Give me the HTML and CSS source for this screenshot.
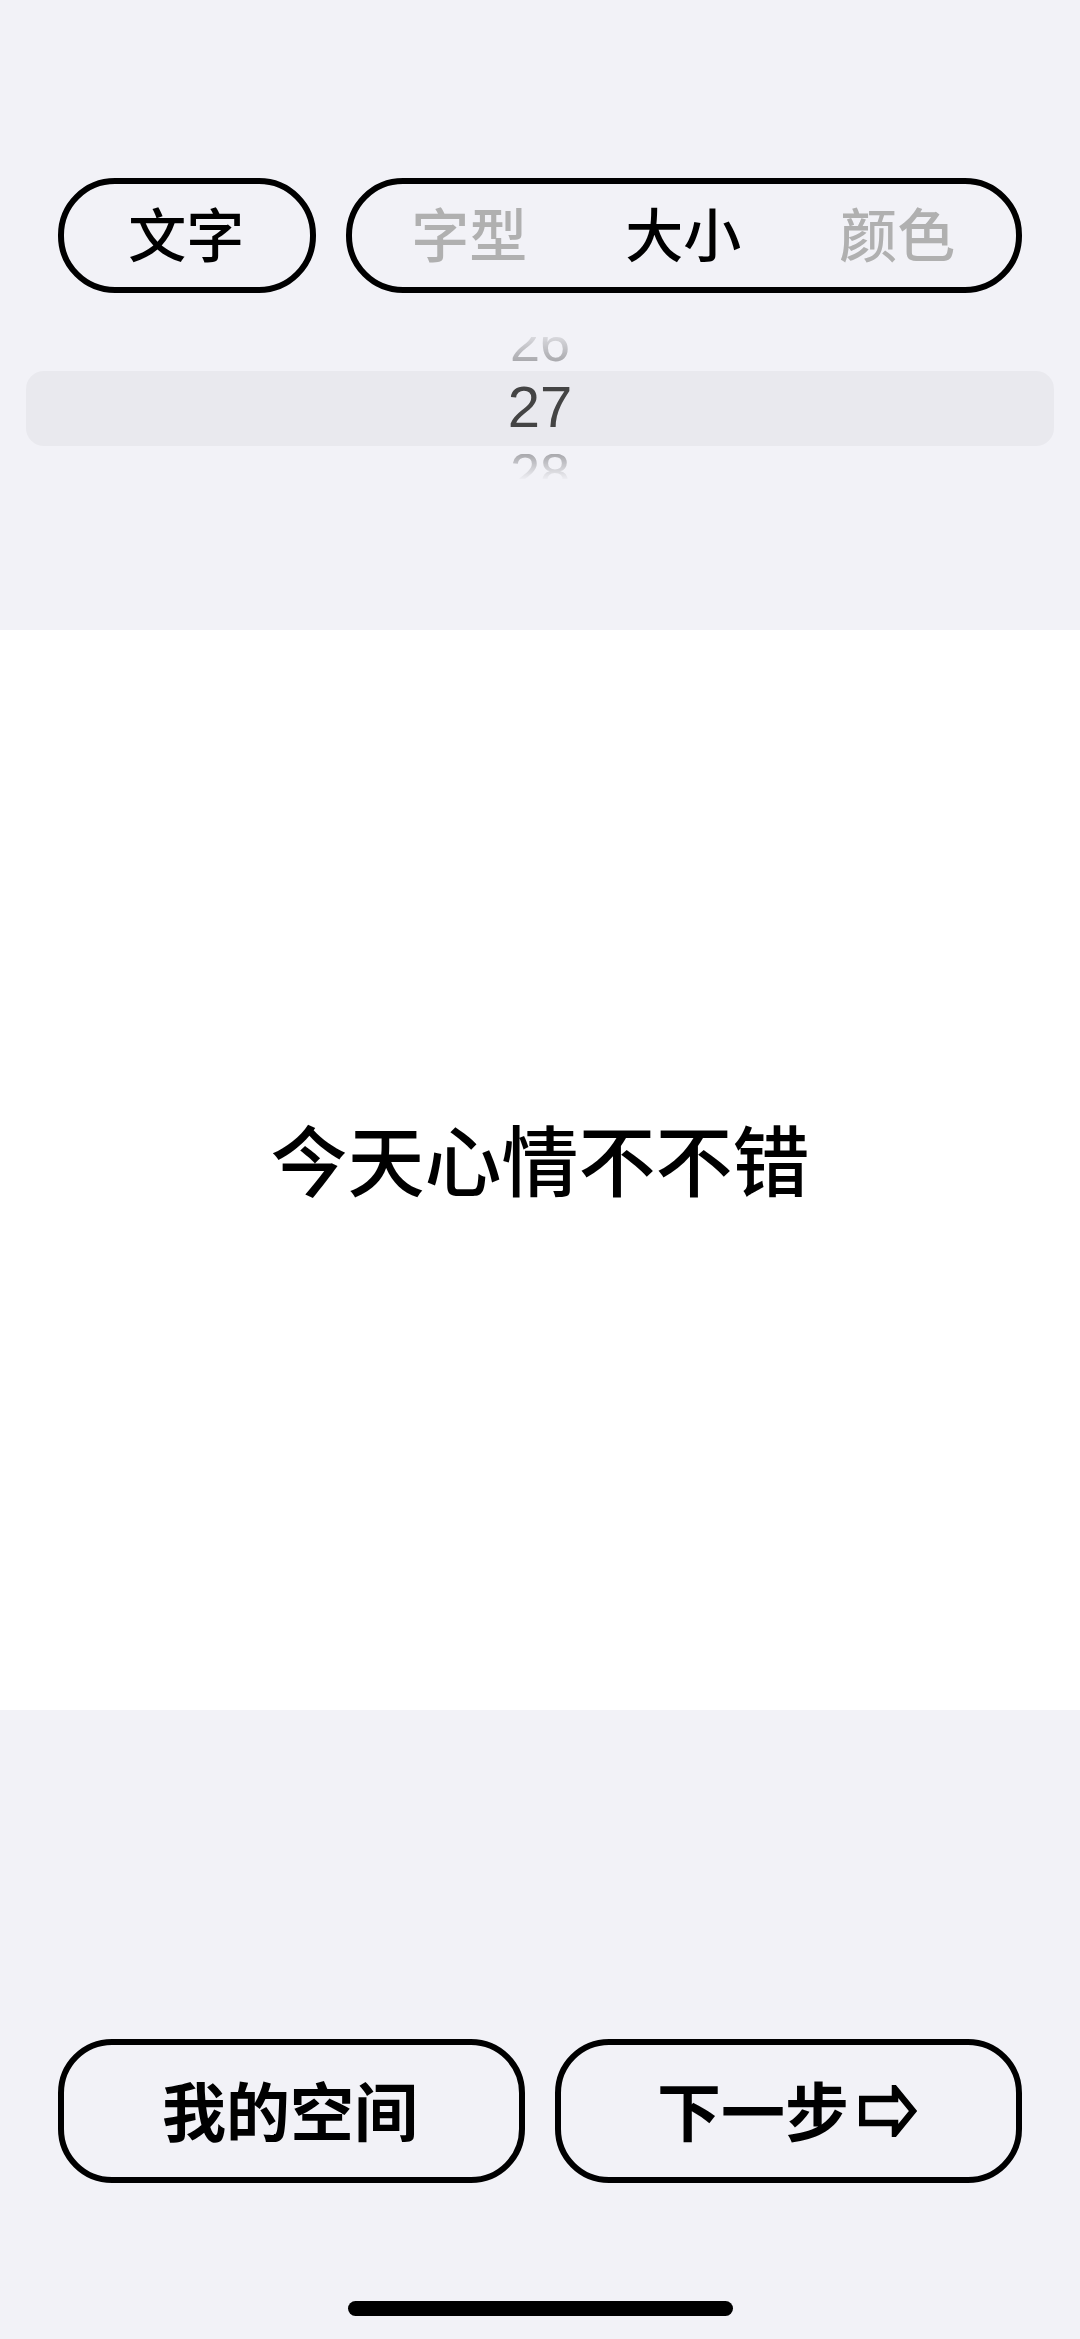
FILE: index.html
```html
<!DOCTYPE html>
<html lang="zh-CN">
<head>
	<meta charset="utf-8">
	<title>文字</title>
	<link rel="stylesheet" href="styles.css">
</head>
<body>
	<div class="app">
		<div class="editor">
			<div class="tabs">
				<div class="pill pill-main">文字</div>
				<div class="pill pill-options">
					<span class="option">字型</span>
					<span class="option option-active">大小</span>
					<span class="option">颜色</span>
				</div>
			</div>
			<div class="picker">
				<div class="wheel wheel-prev"><span>26</span></div>
				<div class="wheel-selected">27</div>
				<div class="wheel wheel-next"><span>28</span></div>
			</div>
		</div>

		<div class="canvas">
			<p class="canvas-text">今天心情不不错</p>
		</div>

		<div class="footer">
			<div class="actions">
				<button class="btn">我的空间</button>
				<button class="btn">下一步
					<svg class="arrow" width="58" height="52" viewBox="0 0 58 52">
						<path d="M3 14H36V4L54 26L36 48V38H3Z" fill="none" stroke="#000" stroke-width="6.5"/>
					</svg>
				</button>
			</div>
			<div class="home-bar"></div>
		</div>
	</div>
</body>
</html>
```

FILE: styles.css
```css
body {
	margin: 0;
	background-color: #f2f2f7;
	color: #000;
	font-family: "Noto Sans CJK SC", "Liberation Sans", sans-serif;
}

.app {
	display: flex;
	flex-direction: column;
	height: 2339px;
	overflow: hidden;
}

.editor {
	height: 630px;
	padding: 178px 26px 0;
	box-sizing: border-box;
}

.tabs {
	display: flex;
	gap: 30px;
	padding: 0 32px;
}

.pill {
	display: flex;
	align-items: center;
	justify-content: center;
	height: 115px;
	padding: 0 2px 7px 0;
	box-sizing: border-box;
	border: 6.5px solid #000;
	border-radius: 57px;
	font-size: 58px;
	font-weight: 500;
	line-height: 1;
}

.pill-main {
	width: 259px;
}

.pill-options {
	width: 677px;
}

.option {
	width: 214px;
	text-align: center;
	color: #b0b0b0;
}

.option-active {
	color: #000;
}

.picker {
	display: flex;
	flex-direction: column;
	margin-top: 44px;
	font-family: "Liberation Sans", sans-serif;
	text-align: center;
}

.wheel {
	display: flex;
	justify-content: center;
	height: 25px;
	overflow: hidden;
	font-size: 54px;
	line-height: 1;
	color: #a8a8ac;
}

.wheel-prev {
	align-items: flex-end;
	margin-bottom: 9px;
	-webkit-mask-image: linear-gradient(to top, #000, rgba(0, 0, 0, 0.35));
	mask-image: linear-gradient(to top, #000, rgba(0, 0, 0, 0.35));
}

.wheel-prev span {
	margin-bottom: -7px;
}

.wheel-next {
	align-items: flex-start;
	margin-top: 8px;
	-webkit-mask-image: linear-gradient(to bottom, #000, rgba(0, 0, 0, 0.05));
	mask-image: linear-gradient(to bottom, #000, rgba(0, 0, 0, 0.05));
}

.wheel-next span {
	margin-top: -9px;
}

.wheel-selected {
	height: 75px;
	border-radius: 18px;
	background-color: #e9e9ee;
	color: #444;
	font-size: 58px;
	line-height: 71px;
}

.canvas {
	display: flex;
	align-items: center;
	justify-content: center;
	height: 1080px;
	padding-bottom: 26px;
	box-sizing: border-box;
	background-color: #fff;
}

.canvas-text {
	margin: 0;
	font-size: 77px;
	font-weight: 500;
	line-height: 1;
}

.footer {
	flex: 1;
	display: flex;
	flex-direction: column;
	align-items: center;
	padding-top: 329px;
}

.actions {
	display: flex;
	gap: 30px;
}

.btn {
	display: flex;
	align-items: center;
	justify-content: center;
	width: 467px;
	height: 144px;
	padding: 0 3px 7px 0;
	box-sizing: border-box;
	border: 6.5px solid #000;
	border-radius: 54px;
	background: none;
	color: #000;
	font-family: inherit;
	font-size: 64px;
	font-weight: 700;
	line-height: 1;
}

.arrow {
	margin-left: 10px;
	margin-top: 7px;
}

.home-bar {
	width: 385px;
	height: 15px;
	margin-top: 118px;
	border-radius: 8px;
	background-color: #000;
}
```
